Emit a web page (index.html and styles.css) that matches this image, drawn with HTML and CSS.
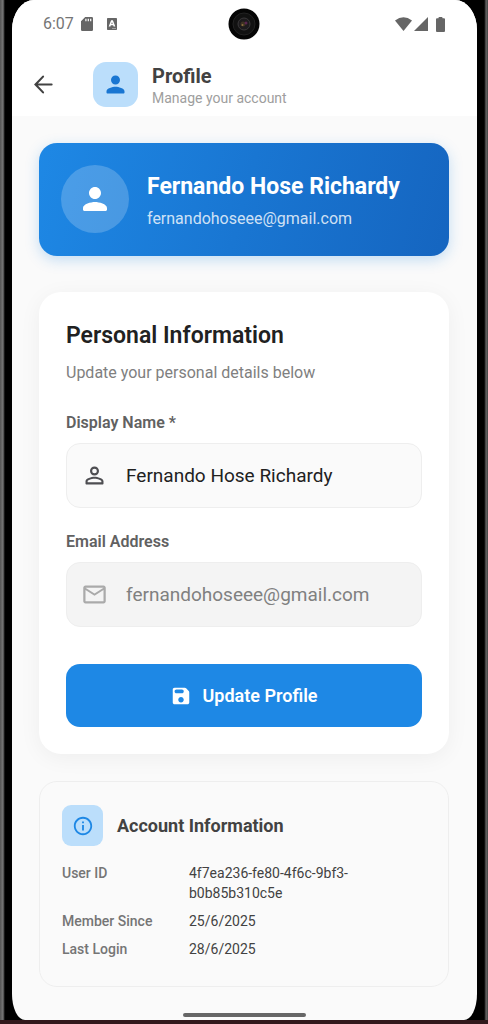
FILE: index.html
```html
<!DOCTYPE html>
<html lang="en">
<head>
<meta charset="utf-8">
<meta name="viewport" content="width=device-width, initial-scale=1">
<title>Profile</title>
<link rel="stylesheet" href="styles.css">
</head>
<body>
<div class="device">
  <div class="screen">
    <div class="top">
      <div class="status">
        <div class="status-left">
          <span class="clock">6:07</span>
          <svg class="sd" viewBox="0 0 12 14" aria-hidden="true"><path fill="#666" fill-rule="evenodd" d="M4.2 0H10.800q1.200 0 1.200 1.200v11.600q0 1.200-1.200 1.200H1.200Q0 14 0 12.800V4.200zM4.300 1.700v2.600h1.200V1.700zM6.700 1.700v2.600h1.200V1.700zM9.100 1.700v2.600h1.200V1.700z"/></svg>
          <svg class="badge-a" viewBox="0 0 10 12" aria-hidden="true"><path fill="#666" fill-rule="evenodd" d="M.8 0h8.400q.8 0 .8.800v10.400q0 .8-.8.800H.8q-.8 0-.8-.8V.800Q0 0 .8 0zM4.100 2.200 1.700 8.500h1.700l.4-1.200h2.400l.4 1.200h1.700L5.900 2.200zM4.300 6 5 3.900l.7 2.100zM5.500 10v.7h1V10zM7.500 10v.7h1V10z"/></svg>
        </div>
        <svg class="camera" viewBox="0 0 32 32" aria-hidden="true">
          <circle cx="16" cy="16" r="15.500" fill="#050505"/>
          <circle cx="16" cy="16" r="11" fill="#111" stroke="#222"/>
          <circle cx="16" cy="16" r="6" fill="#1d1b1d" stroke="#3a383a"/>
          <circle cx="15" cy="16" r="2.500" fill="#3d3222"/>
          <circle cx="14.500" cy="17" r="1" fill="#8b7040"/>
          <circle cx="18" cy="15" r="1.500" fill="#5a2550"/>
        </svg>
        <div class="status-right">
          <svg class="wifi" viewBox="0 0 17 14" aria-hidden="true"><path fill="#666" d="M0 3.500Q8.500-3 17 3.500L8.500 14z"/></svg>
          <svg class="signal" viewBox="0 0 14 14" aria-hidden="true"><path fill="#666" d="M14 0v14H0z"/></svg>
          <svg class="battery" viewBox="0 0 9 15" aria-hidden="true"><path fill="#666" d="M2.500 1.300V.8q0-.8.800-.8h2.400q.8 0 .8.800v.5H8q1 0 1 1V14q0 1-1 1H1q-1 0-1-1V2.300q0-1 1-1z"/></svg>
        </div>
      </div>
      <header class="appbar">
        <button class="back" type="button" aria-label="Back">
          <svg class="icon" viewBox="0 0 24 24" fill="none" stroke="#424242" stroke-width="1.900" stroke-linecap="round" aria-hidden="true"><path d="M19.200 12H5.200M11.600 5 4.900 12l6.700 7"/></svg>
        </button>
        <div class="tile">
          <svg class="icon" viewBox="0 0 24 24" fill="#1976d2" aria-hidden="true"><path d="M12 12c2.210 0 4-1.790 4-4s-1.790-4-4-4-4 1.790-4 4 1.790 4 4 4zm0 2c-2.670 0-8 1.340-8 4v1c0 .55.45 1 1 1h14c.55 0 1-.45 1-1v-1c0-2.660-5.330-4-8-4z"/></svg>
        </div>
        <div class="heading">
          <h1>Profile</h1>
          <p>Manage your account</p>
        </div>
      </header>
    </div>
    <main class="content">
      <section class="hero">
        <div class="avatar">
          <svg class="icon-lg" viewBox="0 0 24 24" fill="#fff" aria-hidden="true"><path d="M12 12c2.210 0 4-1.790 4-4s-1.790-4-4-4-4 1.790-4 4 1.790 4 4 4zm0 2c-2.670 0-8 1.340-8 4v1c0 .55.45 1 1 1h14c.55 0 1-.45 1-1v-1c0-2.660-5.330-4-8-4z"/></svg>
        </div>
        <div class="hero-text">
          <h2>Fernando Hose Richardy</h2>
          <p>fernandohoseee@gmail.com</p>
        </div>
      </section>
      <form class="card">
        <h2>Personal Information</h2>
        <p class="lead">Update your personal details below</p>
        <div class="group">
          <label for="name">Display Name *</label>
          <div class="field">
            <svg class="icon" viewBox="0 0 24 24" fill="#4e4e52" aria-hidden="true"><path d="M12 5.900a2.100 2.100 0 1 1 0 4.200 2.100 2.100 0 0 1 0-4.200m0 9c2.970 0 6.100 1.460 6.100 2.100v1.100H5.900V17c0-.64 3.130-2.100 6.100-2.100M12 4C9.790 4 8 5.790 8 8s1.790 4 4 4 4-1.790 4-4-1.790-4-4-4zm0 9c-2.670 0-8 1.340-8 4v2c0 .55.45 1 1 1h14c.55 0 1-.45 1-1v-2c0-2.660-5.330-4-8-4z"/></svg>
            <input id="name" type="text" value="Fernando Hose Richardy">
          </div>
        </div>
        <div class="group">
          <label for="email">Email Address</label>
          <div class="field field-off">
            <svg class="icon" viewBox="0 0 24 24" fill="#aaa" aria-hidden="true"><path d="M22 6c0-1.100-.9-2-2-2H4c-1.100 0-2 .9-2 2v12c0 1.100.9 2 2 2h16c1.100 0 2-.9 2-2V6zm-2 0-8 5-8-5h16zm0 12H4V8l8 5 8-5v10z"/></svg>
            <input id="email" type="email" value="fernandohoseee@gmail.com" disabled>
          </div>
        </div>
        <button class="save" type="button">
          <svg class="icon-md" viewBox="0 0 24 24" fill="#fff" aria-hidden="true"><path d="M17.590 3.590c-.38-.38-.89-.59-1.420-.59H5c-1.110 0-2 .9-2 2v14c0 1.100.9 2 2 2h14c1.100 0 2-.9 2-2V7.830c0-.53-.21-1.040-.59-1.410l-2.820-2.830zM12 19c-1.660 0-3-1.340-3-3s1.340-3 3-3 3 1.340 3 3-1.340 3-3 3zm1-10H7c-1.100 0-2-.9-2-2s.9-2 2-2h6c1.100 0 2 .9 2 2s-.9 2-2 2z"/></svg>
          <span>Update Profile</span>
        </button>
      </form>
      <section class="account">
        <div class="account-head">
          <div class="tile tile-sm">
            <svg class="icon-md" viewBox="0 0 24 24" fill="#1e88e5" aria-hidden="true"><path d="M11 7h2v2h-2zm0 4h2v6h-2zm1-9C6.480 2 2 6.480 2 12s4.480 10 10 10 10-4.480 10-10S17.520 2 12 2zm0 18c-4.410 0-8-3.590-8-8s3.590-8 8-8 8 3.590 8 8-3.590 8-8 8z"/></svg>
          </div>
          <h2>Account Information</h2>
        </div>
        <dl>
          <dt>User ID</dt><dd>4f7ea236-fe80-4f6c-9bf3-b0b85b310c5e</dd>
          <dt>Member Since</dt><dd>25/6/2025</dd>
          <dt>Last Login</dt><dd>28/6/2025</dd>
        </dl>
      </section>
    </main>
    <div class="home-bar"></div>
  </div>
</div>
</body>
</html>
```

FILE: styles.css
```css
* { box-sizing: border-box; }

body {
  margin: 0;
  background: #32191c;
  font-family: Roboto, "Liberation Sans", sans-serif;
}

h1, h2, p, dl, dd { margin: 0; }

button { border: 0; font-family: inherit; cursor: pointer; }

svg { display: block; flex: none; }

.device {
  display: flex;
  min-height: 100vh;
  padding: 0 11px 0 12px;
  border-bottom: 4px solid #32191c;
  background:
    linear-gradient(to right, #555, #777 3px, #333 4px, #000 5px, #000 12px) left / 12px 100% no-repeat,
    linear-gradient(to left, #444, #666 2px, #222 3px, #000 4px) right / 11px 100% no-repeat,
    #000;
}

.screen {
  flex: 1;
  min-width: 0;
  display: flex;
  flex-direction: column;
  overflow: hidden;
  border-radius: 22px 22px 13px 13px / 30px 30px 26px 26px;
  background: #fafafa;
}

.top { background: #fff; }

.status {
  display: grid;
  grid-template-columns: 1fr auto 1fr;
  align-items: center;
  height: 48px;
  padding: 0 32px 0 31px;
}

.status-left, .status-right { display: flex; align-items: center; }
.status-right { justify-content: flex-end; }

.clock { color: #757575; font-size: 16px; line-height: 20px; }
.sd { width: 12px; height: 14px; margin: 0 14px 0 7px; }
.badge-a { width: 10px; height: 12px; }
.camera { width: 32px; height: 32px; }
.wifi { width: 17px; height: 14px; }
.signal { width: 14px; height: 14px; margin: 0 8px 0 2px; }
.battery { width: 9px; height: 15px; }

.appbar {
  display: flex;
  align-items: center;
  height: 68px;
  padding: 4px 18px 0;
}

.icon { width: 27px; height: 27px; }
.icon-md { width: 22px; height: 22px; }
.icon-lg { width: 36px; height: 36px; }

.back { padding: 0; margin-right: 36px; background: none; }

.tile {
  display: grid;
  place-items: center;
  flex: none;
  width: 45px;
  height: 45px;
  border-radius: 13px;
  background: #bbdefb;
}

.tile-sm { width: 41px; height: 41px; border-radius: 9px; }

.heading { margin-left: 14px; padding-top: 4px; }
.heading h1 { color: #424242; font-size: 20px; line-height: 24px; font-weight: 700; }
.heading p { color: #9e9e9e; font-size: 14px; line-height: 20px; }

.content {
  flex: 1;
  display: flex;
  flex-direction: column;
  padding: 27px 28px 24px 27px;
}

.hero {
  display: flex;
  align-items: center;
  gap: 18px;
  padding: 22px 22px 23px;
  border-radius: 18px;
  background: linear-gradient(105deg, #1e88e5, #1976d2 50%, #1565c0);
  box-shadow: 0 4px 14px rgba(30, 136, 229, .25);
}

.avatar {
  display: grid;
  place-items: center;
  flex: none;
  width: 68px;
  height: 68px;
  border-radius: 50%;
  background: rgba(255, 255, 255, .2);
}

.hero-text { padding-top: 3px; }
.hero-text h2 { color: #fff; font-size: 23px; line-height: 28px; font-weight: 700; }
.hero-text p { margin-top: 8px; color: rgba(255, 255, 255, .8); font-size: 16px; line-height: 20px; }

.card {
  display: flex;
  flex-direction: column;
  margin-top: 36px;
  padding: 28px 27px 27px;
  border-radius: 22px;
  background: #fff;
  box-shadow: 0 4px 22px rgba(0, 0, 0, .05);
}

.card h2 { color: #212121; font-size: 23px; line-height: 32px; font-weight: 600; }
.lead { margin-top: 10px; color: #808080; font-size: 16px; line-height: 22px; }

.group { margin-top: 24px; }
.lead + .group { margin-top: 29px; }
.group label { display: block; margin-bottom: 10px; color: #616161; font-size: 16px; line-height: 20px; font-weight: 600; }

.field {
  display: flex;
  align-items: center;
  gap: 18px;
  height: 65px;
  padding: 0 14px;
  border: 1px solid #eee;
  border-radius: 14px;
  background: #fafafa;
}

.field-off { background: #f4f4f4; }

.field input {
  flex: 1;
  min-width: 0;
  padding: 0;
  border: 0;
  background: none;
  color: #212121;
  font: 19px/24px Roboto, "Liberation Sans", sans-serif;
}

.field-off input { color: #808080; }

.save {
  display: flex;
  align-items: center;
  justify-content: center;
  gap: 10px;
  height: 63px;
  margin-top: 37px;
  border-radius: 14px;
  background: #1e88e5;
  color: #fff;
  font-size: 18px;
  font-weight: 600;
}

.account {
  margin-top: 27px;
  padding: 23px 22px 27px;
  border: 1px solid #eee;
  border-radius: 18px;
}

.account-head { display: flex; align-items: center; gap: 14px; }
.account h2 { color: #424242; font-size: 18px; line-height: 24px; font-weight: 700; }

.account dl {
  display: grid;
  grid-template-columns: 127px 1fr;
  gap: 8px 0;
  margin-top: 17px;
  font-size: 14px;
  line-height: 20px;
}

.account dt { color: #757575; font-weight: 500; }
.account dd { color: #424242; }

.home-bar {
  align-self: center;
  width: 123px;
  height: 4px;
  margin-bottom: 3px;
  border-radius: 2px;
  background: #666;
}
```
